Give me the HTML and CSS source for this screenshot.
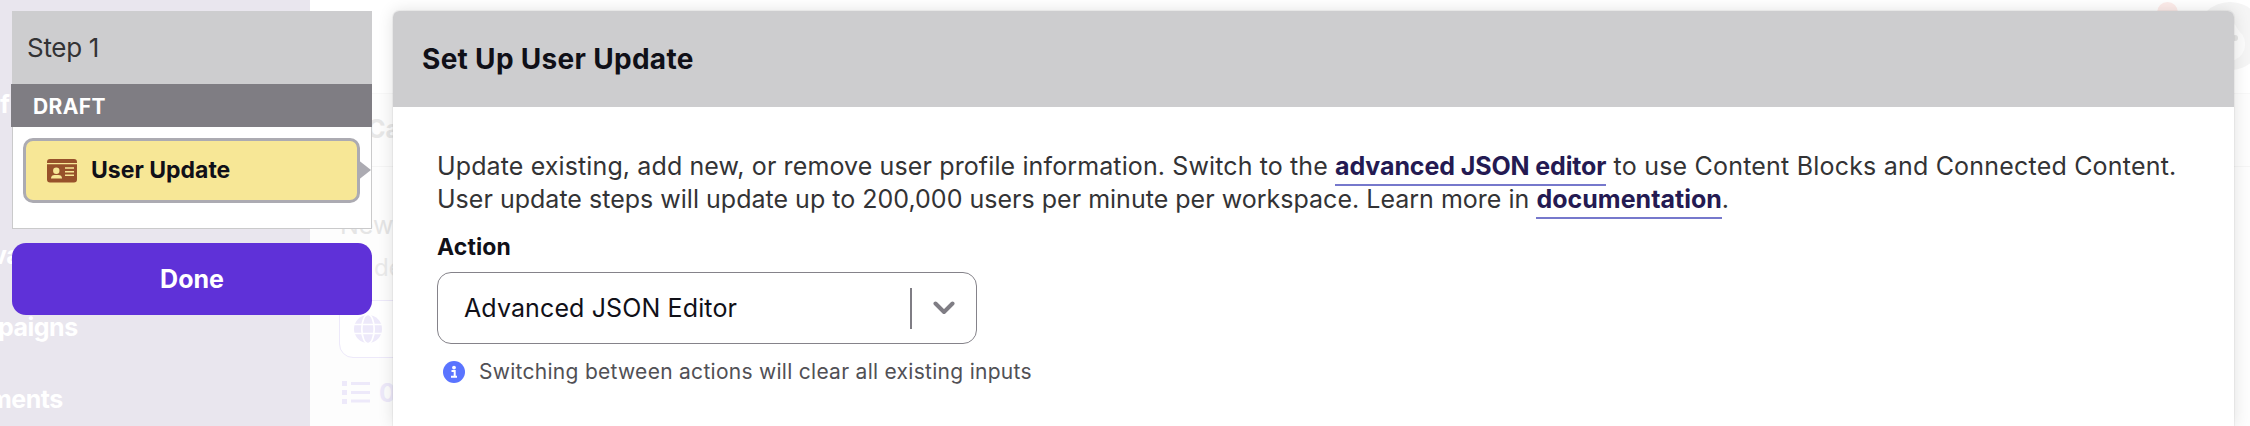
FILE: index.html
```html
<!DOCTYPE html>
<html lang="en">
<head>
<meta charset="utf-8">
<title>Set Up User Update</title>
<link rel="stylesheet" href="styles.css">
</head>
<body>
<div class="backdrop">
  <nav class="side">
    <span class="side-item side-item-first">f</span>
    <span class="side-item side-item-va">va</span>
    <span class="side-item">paigns</span>
    <span class="side-item side-item-ments">ments</span>
  </nav>
  <main class="page">
    <header class="topbar"><span class="badge"></span><span class="avatar"><svg width="68" height="68" viewBox="0 0 68 68"><circle cx="34" cy="34" r="34" fill="#f5f5f5"/><path d="M34 15 L43 29 A17 17 0 0 1 34 59Z" fill="#fcfcfc"/><circle cx="39" cy="36" r="3" fill="#e5e5e5"/></svg></span></header>
    <div class="crumb">Ca</div>
    <div class="page-title">New</div>
    <div class="page-sub">de</div>
    <div class="lang"><svg width="28" height="28" viewBox="0 0 28 28"><circle cx="14" cy="14" r="14" fill="#ede9fa"/><g fill="none" stroke="#fff" stroke-width="1.7"><ellipse cx="14" cy="14" rx="6.2" ry="14.5"/><path d="M0 9.5H28M0 18.5H28"/></g></svg></div>
    <div class="count"><svg width="28" height="24" viewBox="0 0 28 24" fill="#ede9fa"><path d="M0 0h5v5H0zM0 9h5v5H0zM0 18h5v5H0zM9 1h19v3H9zM9 10h19v3H9zM9 18.500h19v3H9z"/></svg><span>0</span></div>
  </main>
</div>

<div class="overlay">
  <aside class="steps">
    <section class="step-card">
      <h2 class="step-title">Step 1</h2>
      <div class="step-state">DRAFT</div>
      <div class="step-body">
        <div class="step-item">
          <svg class="id-icon" width="30" height="24" viewBox="0 0 30 24"><path d="M3 0H27A3 3 0 0 1 30 3V4H0V3A3 3 0 0 1 3 0ZM0 5.300H30V20.500A3 3 0 0 1 27 23.500H3A3 3 0 0 1 0 20.500Z" fill="#97512a"/><g fill="#f7e796"><circle cx="9.300" cy="11.700" r="3.200"/><path d="M4 19.500C4 17 5.500 16 7.500 16H11.500C13.500 16 15 17 15 19.500Z"/><path d="M18 8.300h9v1.500h-9zM18 12h9v1.500h-9zM18 15.400h9v1.500h-9z"/></g></svg>
          <span>User Update</span>
        </div>
      </div>
    </section>
    <button class="done" type="button">Done</button>
  </aside>

  <section class="panel">
    <header class="panel-head"><h1>Set Up User Update</h1></header>
    <div class="panel-body">
      <p class="intro"><span class="line line-one">Update existing, add new, or remove user profile information. Switch to the <a>advanced JSON editor</a><span class="line-tail"> to use Content Blocks and Connected Content.</span></span>
      <span class="line line-two">User update steps will update up to 200,000 users per minute per workspace. Learn more in <a>documentation</a>.</span></p>
      <div class="label">Action</div>
      <div class="select">
        <span class="select-value">Advanced JSON Editor</span>
        <span class="select-rule"></span>
        <svg class="chevron" width="22" height="14" viewBox="0 0 22 14"><path d="M2.500 2.500L11 11L19.500 2.500" fill="none" stroke="#7f7d84" stroke-width="4" stroke-linecap="round" stroke-linejoin="round"/></svg>
      </div>
      <div class="hint">
        <svg width="22" height="22" viewBox="0 0 22 22"><circle cx="11" cy="11" r="11" fill="#5a74ff"/><circle cx="11" cy="6.600" r="1.900" fill="#fff"/><path d="M8.500 10H11.700V15.500M8 15.700H14" fill="none" stroke="#fff" stroke-width="2"/></svg>
        <span>Switching between actions will clear all existing inputs</span>
      </div>
    </div>
  </section>
</div>
</body>
</html>
```
FILE: styles.css
```css
* { box-sizing: border-box; }
body {
  margin: 0;
  width: 2250px;
  height: 426px;
  position: relative;
  overflow: hidden;
  background: #fff;
  color: #333335;
  font-family: Inter, "Liberation Sans", sans-serif;
  font-size: 25px;
}
h1, h2, p { margin: 0; }
svg { display: block; flex: none; }

.backdrop { display: flex; height: 426px; overflow: hidden; }
.side {
  width: 310px;
  padding-top: 68px;
  display: flex;
  flex-direction: column;
  background: #e9e6ee;
  color: #fff;
  font-weight: 700;
  overflow: hidden;
}
.side-item { flex: none; height: 72px; line-height: 72px; letter-spacing: -0.5px; margin-left: -2px; }
.side-item:last-child { height: 62px; }
.side-item-first { margin-bottom: 79px; margin-left: 0; }
.side-item-va { margin-left: -8px; }
.side-item-ments { margin-left: -11px; }

.page { flex: 1; background: #fdfdfd; overflow: hidden; }
.topbar {
  height: 94px;
  padding-top: 2px;
  display: flex;
  justify-content: flex-end;
  background: #fff;
  border-bottom: 1px solid #f8f8f8;
}
.badge { width: 21px; height: 21px; margin-right: 18px; border-radius: 50%; background: #fdecea; }
.avatar { width: 54px; overflow: hidden; }
.crumb {
  height: 73px;
  padding-left: 57px;
  line-height: 70px;
  font-weight: 700;
  color: #e7e7e7;
  border-bottom: 1px solid #f5f5f5;
}
.page-title { padding: 42px 0 0 30px; line-height: 32px; color: #e5e5e5; }
.page-sub { padding-left: 64px; margin-top: 11px; line-height: 32px; font-size: 24px; color: #ebebeb; }
.lang {
  width: 300px;
  height: 58px;
  margin: 16px 0 0 29px;
  padding: 14px;
  border: 1px solid #ede9fa;
  border-radius: 14px;
  background: #fff;
}
.count { display: flex; gap: 9px; margin: 23px 0 0 32px; line-height: 24px; font-weight: 700; color: #ede9fa; }

.overlay { position: absolute; inset: 0; display: flex; gap: 21px; padding: 11px 16px 0 12px; }
.steps { width: 360px; flex: none; }
.step-card { height: 218px; background: #fff; border: 1px solid #cacacb; border-top: 0; }
.step-title {
  height: 73px;
  margin: 0 -1px;
  padding-left: 15px;
  background: #cdcdcf;
  line-height: 74px;
  font-weight: 400;
  font-size: 26px;
  letter-spacing: -0.3px;
}
.step-state {
  height: 43px;
  margin: 0 -1px 0 -2px;
  padding-left: 22px;
  background: #7f7d83;
  color: #fff;
  font-weight: 700;
  font-size: 21px;
  letter-spacing: 0.4px;
  line-height: 45px;
}
.step-body { padding: 11px 11px 0 10px; }
.step-item {
  position: relative;
  height: 65px;
  display: flex;
  align-items: center;
  gap: 14px;
  padding-left: 21px;
  border: 3px solid #acabb2;
  border-radius: 10px;
  background: #f7e796;
  color: #101018;
  font-weight: 700;
  font-size: 23px;
}
.step-item span { padding-bottom: 2px; }
.step-item::after {
  content: "";
  position: absolute;
  left: 100%;
  top: 18px;
  border: 11px solid transparent;
  border-left-color: #acabb2;
  border-left-width: 14px;
  border-right: 0;
}
.done {
  display: block;
  width: 360px;
  height: 72px;
  margin-top: 14px;
  border: 0;
  border-radius: 14px;
  background: #5f31d8;
  color: #fff;
  font: 700 25px Inter, sans-serif;
}

.panel {
  flex: 1;
  border-radius: 6px 6px 0 0;
  background: #fff;
  box-shadow: 0 0 0 1px rgba(0, 0, 0, .04), 0 0 16px rgba(0, 0, 0, .12);
}
.panel-head { height: 96px; padding-left: 29px; border-radius: 6px 6px 0 0; background: #cdcdcf; }
.panel-head h1 { line-height: 97px; font-size: 28px; letter-spacing: 0.3px; font-weight: 700; color: #101018; white-space: nowrap; }
.panel-body { padding: 43px 0 0 44px; }
.intro { line-height: 33px; }
.line { display: block; white-space: nowrap; }
.line-one { letter-spacing: 0.12px; }
.line-one a { letter-spacing: -0.12px; }
.line-tail { letter-spacing: 0.2px; }
.line-two { letter-spacing: 0.015px; }
.line a { color: #241a52; font-weight: 700; border-bottom: 2px solid #7678cc; padding-bottom: 3px; }
.label { margin-top: 15px; line-height: 32px; color: #101018; font-weight: 700; font-size: 23px; letter-spacing: 0.1px; }
.select {
  width: 540px;
  height: 72px;
  margin-top: 9px;
  padding: 0 21px 0 26px;
  display: flex;
  align-items: center;
  border: 1px solid #85838a;
  border-radius: 14px;
  color: #101018;
}
.select-value { flex: 1; letter-spacing: 0.12px; }
.select-rule { width: 2px; height: 41px; margin-right: 21px; background: #7f7d84; }
.hint { display: flex; align-items: center; gap: 14px; margin: 12px 0 0 6px; line-height: 32px; font-size: 21px; letter-spacing: 0.28px; color: #515055; }
```
